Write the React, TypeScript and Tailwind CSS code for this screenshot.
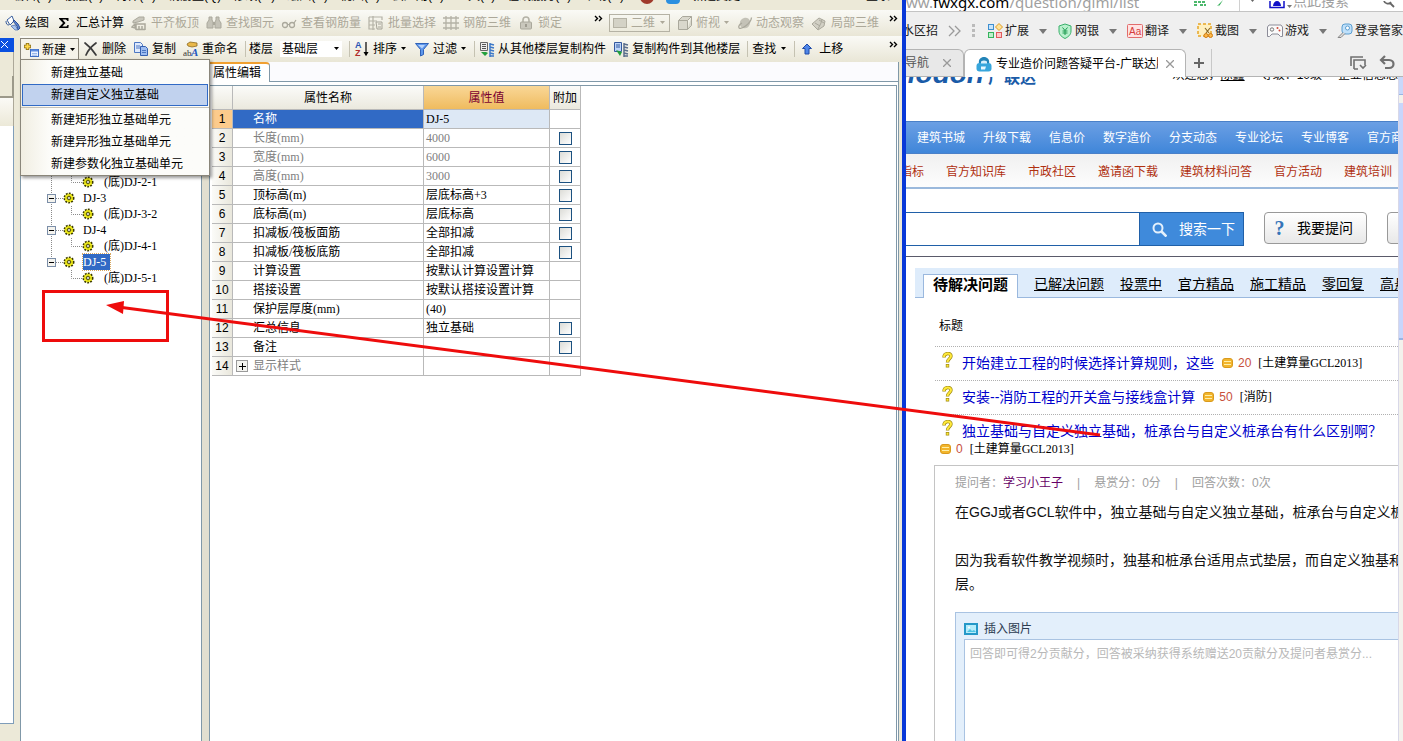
import type { ReactNode } from 'react'

const MENU_BAR = ['编辑(E)', '楼层(F)', '构件(N)', '钢筋量(Q)', '修改(M)', '绘图(D)', '视图(V)', '云应用(Y)', '工具(T)', '在线服务(S)', '帮助(H)']

const NEW_MENU = [
    ['新建独立基础', '新建自定义独立基础'],
    ['新建矩形独立基础单元', '新建异形独立基础单元', '新建参数化独立基础单元'],
]
const ACTIVE_ITEM = '新建自定义独立基础'

const TREE = [
    { label: '(底)DJ-2-1', child: true },
    { label: 'DJ-3' },
    { label: '(底)DJ-3-2', child: true },
    { label: 'DJ-4' },
    { label: '(底)DJ-4-1', child: true },
    { label: 'DJ-5', selected: true },
    { label: '(底)DJ-5-1', child: true, last: true },
]

interface Prop {
    name: string
    value: string
    check?: boolean
    muted?: boolean
}

const PROPS: Prop[] = [
    { name: '名称', value: 'DJ-5' },
    { name: '长度(mm)', value: '4000', check: true, muted: true },
    { name: '宽度(mm)', value: '6000', check: true, muted: true },
    { name: '高度(mm)', value: '3000', check: true, muted: true },
    { name: '顶标高(m)', value: '层底标高+3', check: true },
    { name: '底标高(m)', value: '层底标高', check: true },
    { name: '扣减板/筏板面筋', value: '全部扣减', check: true },
    { name: '扣减板/筏板底筋', value: '全部扣减', check: true },
    { name: '计算设置', value: '按默认计算设置计算' },
    { name: '搭接设置', value: '按默认搭接设置计算' },
    { name: '保护层厚度(mm)', value: '(40)' },
    { name: '汇总信息', value: '独立基础', check: true },
    { name: '备注', value: '', check: true },
    { name: '显示样式', value: '', muted: true },
]

const NAV = ['建筑书城', '升级下载', '信息价', '数字造价', '分支动态', '专业论坛', '专业博客', '官方商城']
const SUBNAV = ['指标', '官方知识库', '市政社区', '邀请函下载', '建筑材料问答', '官方活动', '建筑培训']
const LIST_TABS = ['已解决问题', '投票中', '官方精品', '施工精品', '零回复', '高悬赏']

const QUESTIONS = [
    { title: '开始建立工程的时候选择计算规则，这些', score: 20, tag: '[土建算量GCL2013]' },
    { title: '安装--消防工程的开关盒与接线盒计算', score: 50, tag: '[消防]' },
    { title: '独立基础与自定义独立基础，桩承台与自定义桩承台有什么区别啊？', score: 0, tag: '[土建算量GCL2013]' },
]

function Icon({ children }: { children: ReactNode }) {
    return (
        <svg width="16" height="16" viewBox="0 0 16 16" fill="none" className="shrink-0" aria-hidden="true">
            {children}
        </svg>
    )
}

function Caret({ className = 'text-black' }: { className?: string }) {
    return (
        <svg width="7" height="4" viewBox="0 0 7 4" className={`shrink-0 ${className}`} aria-hidden="true">
            <path d="M1 0h5L3.500 3z" fill="currentColor" />
        </svg>
    )
}

function More() {
    return (
        <svg width="10" height="8" viewBox="0 0 10 8" fill="none" stroke="#000" strokeWidth="1.400" className="mb-2 shrink-0" aria-hidden="true">
            <path d="M1 1l2.500 2.500L1 6M5 1l2.500 2.500L5 6" />
        </svg>
    )
}

/* ---- toolbar drawings ---- */

const PaintIcon = () => (
    <Icon>
        <path d="M2 5l5-4 2 5-4 4z" fill="#fff" stroke="#3a5f9e" />
        <path d="M1 6c0 3 1 4 3 4" stroke="#3a5f9e" />
        <path d="M8 6l4 5 1 4 2-2-2-4-4-4z" fill="#5b86d6" stroke="#2f4f94" />
        <path d="M6 11l4 4h3l-3-5z" fill="#a8c4ee" stroke="#4064aa" strokeWidth=".7" />
    </Icon>
)
const SumIcon = () => (
    <Icon>
        <path d="M3 3h9.500v3h-1L10 4.500H6.500L9.500 8l-3.200 3.600H10.500L11.500 10h1.200l-.3 3H3v-.8L7 8 3 3.800z" fill="#000" />
    </Icon>
)
const AlignIcon = () => (
    <Icon>
        <path d="M2 6l6-4h5v3l-6 2-5 1z" fill="#c9c7bc" stroke="#aaa89c" />
        <path d="M1 12l3-3v4zM5 9h9v6M5 9v6M8 11v4M11 11v4M5 14.500h9" stroke="#aaa89c" strokeWidth="1.500" />
    </Icon>
)
const BinocularIcon = () => (
    <Icon>
        <path d="M3 2h3v3l1 2v6H1V8l2-3zM10 2h3v3l2 3v5H9V7l1-2z" fill="#c4c2b7" stroke="#aaa89c" />
        <path d="M7 7h2v3H7z" fill="#aaa89c" />
    </Icon>
)
const GlassesIcon = () => (
    <Icon>
        <circle cx="4" cy="10" r="2.500" stroke="#aaa89c" strokeWidth="1.300" />
        <circle cx="11" cy="10" r="2.500" stroke="#aaa89c" strokeWidth="1.300" />
        <path d="M6.500 9.500h2M13 8l2-3" stroke="#aaa89c" strokeWidth="1.200" />
    </Icon>
)
const BatchIcon = () => (
    <Icon>
        <path d="M1 2h13v3M1 2v12h6M5 1v14M1 6h8M1 10h6" stroke="#b4b2a6" strokeWidth="1.200" />
        <path d="M8 7h6v7H9zM10 9h3M10 12h3" stroke="#a5a398" />
    </Icon>
)
const GridIcon = () => (
    <Icon>
        <path d="M0 3h16M0 8h16M0 13h16M3 1v14M8 1v14M13 1v14" stroke="#b4b2a6" strokeWidth="1.300" />
    </Icon>
)
const LockIcon = () => (
    <Icon>
        <path d="M5 7V5a3 3 0 016 0v2" stroke="#b4b2a6" strokeWidth="1.600" />
        <rect x="2.500" y="7" width="11" height="7" rx="1" fill="#c9c7bc" stroke="#aaa89c" />
        <path d="M8 9v3" stroke="#8f8d82" strokeWidth="1.500" />
    </Icon>
)
const CubeIcon = () => (
    <Icon>
        <path d="M1.500 5.500h9v9h-9zM1.500 5.500l4-4h9l-4 4M14.500 1.500v9l-4 4" fill="#d9d7cc" stroke="#aaa89c" />
    </Icon>
)
const OrbitIcon = () => (
    <Icon>
        <ellipse cx="8" cy="8" rx="5" ry="5.500" fill="#c4c2b7" transform="rotate(40 8 8)" />
        <path d="M2 13C5 15 14 8 14.500 2.500M2 13c-1-2 1-4 3-5" stroke="#aaa89c" strokeWidth="1.300" />
    </Icon>
)
const Local3dIcon = () => (
    <Icon>
        <path d="M1 9l7-6 6 3-1 5-6 4z" fill="#d2d0c5" stroke="#aaa89c" />
        <path d="M4 8l5 3M8 5l5 3M7 14l3-6 1-4" stroke="#aaa89c" />
    </Icon>
)
const NewIcon = () => (
    <Icon>
        <path d="M4.500 1v7M1 4.500h7" stroke="#8a6d16" strokeWidth="3.400" />
        <path d="M4.500 1.700v5.600M1.700 4.500h5.600" stroke="#ffd94a" strokeWidth="1.800" />
        <rect x="7.500" y="7.500" width="8" height="7" fill="#eaf2ff" stroke="#3f6fc4" />
        <path d="M8 8.500h7" stroke="#5c8be0" strokeWidth="2" />
        <path d="M9 11.500h5M9 13.200h5" stroke="#9ab8ea" />
    </Icon>
)
const DeleteIcon = () => (
    <Icon>
        <path d="M2 2c4 3 8 7 11 12M13 2C9 5 5 9 3 14" stroke="#3c3c3c" strokeWidth="1.700" strokeLinecap="round" />
    </Icon>
)
const CopyIcon = () => (
    <Icon>
        <path d="M1.500 1.500h6l2 2v8h-8z" fill="#dfeafc" stroke="#4c77c2" />
        <path d="M7.500 5.500h5l2 2v7h-7z" fill="#9dbcf0" stroke="#3560b0" />
        <path d="M3 5h4M3 7h4M9 9.500h4M9 11.500h4" stroke="#4c77c2" />
    </Icon>
)
const RenameIcon = () => (
    <Icon>
        <path d="M4 3l3-2 7 1v3L9 6 5 5z" fill="#e9b84a" stroke="#8d6b22" strokeWidth=".8" />
        <text x="0" y="15" fontSize="9" fontFamily="Liberation Serif" fill="#333">ab</text>
        <text x="8" y="15" fontSize="11" fontWeight="bold" fontStyle="italic" fontFamily="Liberation Serif" fill="#2457c0">A</text>
    </Icon>
)
const SortIcon = () => (
    <Icon>
        <text x="1" y="7" fontSize="9" fontWeight="bold" fontFamily="Liberation Sans" fill="#2b55b4">A</text>
        <text x="1" y="15" fontSize="9" fontWeight="bold" fontFamily="Liberation Sans" fill="#b02c2c">Z</text>
        <path d="M12 1v12M10.500 11.500L12 14l1.500-2.500z" stroke="#000" strokeWidth="1.200" fill="#000" />
    </Icon>
)
const FunnelIcon = () => (
    <Icon>
        <path d="M1.500 2.500h13l-5 6v5l-3 1.500V8.500z" fill="#5d97ec" stroke="#2f62b8" />
        <path d="M4 4h7L8 7.500z" fill="#b7d3fb" />
    </Icon>
)
const CopyFloorIcon = () => (
    <Icon>
        <path d="M1.500 1.500h7v8h-7z" fill="#eee" stroke="#666" />
        <path d="M3 3.500h4M3 5.500h4M3 7.500h4" stroke="#555" />
        <path d="M2 11l4 4 3-3-2-1z" fill="#23a03c" />
        <path d="M11 2v14M11 3l4 1M11 6l4 1M11 9l4 1M11 12l4 1M11 15h4" stroke="#3c78c8" strokeWidth="1.500" />
    </Icon>
)
const CopyToFloorIcon = () => (
    <Icon>
        <path d="M1.500 1.500h7v9h-7z" fill="#bcd4f8" stroke="#33589e" />
        <path d="M3 4h4M3 6h4" stroke="#33589e" />
        <path d="M3 9l4 6 2-4z" fill="#23a03c" />
        <path d="M11 2v14M11 3l4 1M11 6l4 1M11 9l4 1M11 12l4 1M11 15h4" stroke="#5a6e8c" strokeWidth="1.500" />
    </Icon>
)
const UpIcon = () => (
    <Icon>
        <path d="M8 3l4.500 4.500H10V13H6V7.500H3.500z" fill="#4f86e8" stroke="#1f4ba8" />
    </Icon>
)

const TOOLS_LEFT = [
    { label: '绘图', icon: <PaintIcon />, on: true },
    { label: '汇总计算', icon: <SumIcon />, on: true },
    { label: '平齐板顶', icon: <AlignIcon /> },
    { label: '查找图元', icon: <BinocularIcon /> },
    { label: '查看钢筋量', icon: <GlassesIcon /> },
    { label: '批量选择', icon: <BatchIcon /> },
    { label: '钢筋三维', icon: <GridIcon /> },
    { label: '锁定', icon: <LockIcon /> },
]

interface ToolProps {
    label: string
    icon?: ReactNode
    disabled?: boolean
    caret?: boolean
    divider?: boolean
    tight?: boolean
}

function Tool({ label, icon, disabled, caret, divider, tight }: ToolProps) {
    return (
        <div className={`flex shrink-0 items-center ${divider ? 'border-l border-[#c5c2b2] pl-1' : ''}`}>
            <button disabled={disabled} className={`flex items-center leading-4 ${tight ? 'gap-[3px]' : 'gap-1'} ${disabled ? 'text-[#aca899]' : 'text-black'}`}>
                {icon}
                {label}
                {caret && <Caret className={disabled ? 'text-[#aca899]' : 'text-black'} />}
            </button>
        </div>
    )
}

function GearIcon() {
    return (
        <svg width="12" height="12" viewBox="0 0 12 12" className="shrink-0" aria-hidden="true">
            <circle cx="6" cy="6" r="4.600" fill="#f2ee1c" stroke="#3a3800" strokeWidth="1.800" strokeDasharray="1.800 1.200" />
            <circle cx="6" cy="6" r="3.800" fill="#f2ee1c" />
            <path d="M6 2.500v7M2.500 6h7M3.800 3.800l4.400 4.400M8.200 3.800L3.800 8.200" stroke="#8c8600" strokeWidth=".6" />
            <circle cx="6" cy="6" r="1.500" fill="#fff" stroke="#3a3800" strokeWidth=".9" />
        </svg>
    )
}

function TreeNode({ label, child, selected, last }: { label: string; child?: boolean; selected?: boolean; last?: boolean }) {
    return (
        <li className="flex h-4 items-center">
            <svg width={child ? 61 : 42} height="16" className="shrink-0" stroke="#8a8a8a" strokeDasharray="1 1" fill="none" aria-hidden="true">
                {!last && <path d={selected ? 'M30.500 0v8' : 'M30.500 0v16'} />}
                {child ? (
                    <path d="M50.500 0v8.500H61" />
                ) : (
                    <>
                        <path d="M35 8.500h7" />
                        <rect x="26.500" y="4.500" width="8" height="8" fill="#f4f3ee" stroke="#7b8ea8" strokeDasharray="none" />
                        <path d="M28 8.500h5" stroke="#000" strokeDasharray="none" />
                    </>
                )}
            </svg>
            <GearIcon />
            <span className={`leading-4 ${child ? 'ml-[10px]' : 'ml-2'} ${selected ? 'bg-[#316ac5] pr-1 text-white outline-1 outline-dotted outline-[#d8a860]' : ''}`}>{label}</span>
        </li>
    )
}

function PropertyTable() {
    const cell = 'border-r border-b border-[#b9b9b9] p-0 font-normal'
    const head = 'bg-linear-to-b from-[#fbfbf9] to-[#ebe9de]'
    return (
        <table className="w-[369px] table-fixed border-separate border-spacing-0 font-['Liberation_Serif','Noto_Sans_CJK_SC',serif] text-xs leading-4">
            <colgroup>
                <col className="w-[21px]" />
                <col className="w-[191px]" />
                <col className="w-[126px]" />
                <col className="w-[31px]" />
            </colgroup>
            <thead>
                <tr className="h-6">
                    <th className={`${cell} ${head}`} />
                    <th className={`${cell} ${head}`}>属性名称</th>
                    <th className={`${cell} bg-linear-to-b from-[#f9d796] to-[#efbb5e] text-[#7a0030]`}>属性值</th>
                    <th className={`${cell} ${head}`}>附加</th>
                </tr>
            </thead>
            <tbody>
                {PROPS.map((p, i) => {
                    const first = i === 0
                    const group = i === PROPS.length - 1
                    return (
                        <tr key={p.name} className={`h-[19px] ${p.muted ? 'text-[#808080]' : 'text-black'}`}>
                            <th scope="row" className={`${cell} font-['Liberation_Sans',sans-serif] text-black ${first ? 'bg-[#fccb8c]' : 'bg-linear-to-r from-[#fbfbf8] to-[#e9e7dc]'}`}>
                                {i + 1}
                            </th>
                            <td className={`${cell} ${first ? 'bg-[#316ac5] text-white' : ''}`}>
                                {group ? (
                                    <div className="flex items-center gap-[5px] pl-[3px]">
                                        <button aria-label="展开" className="flex size-3 items-center justify-center border border-[#9a9a9a] bg-[#f4f4f0]">
                                            <svg width="7" height="7" stroke="#000" aria-hidden="true"><path d="M0 3.500h7M3.500 0v7" /></svg>
                                        </button>
                                        {p.name}
                                    </div>
                                ) : (
                                    <div className="pl-5">{p.name}</div>
                                )}
                            </td>
                            <td className={`${cell} ${first ? 'bg-[#dde8f5]' : ''}`}>
                                <div className="pl-[2px]">{p.value}</div>
                            </td>
                            <td className={cell}>
                                {p.check && (
                                    <input
                                        type="checkbox"
                                        aria-label={p.name}
                                        className="mx-auto block size-[13px] appearance-none border border-[#1c5180] bg-linear-to-br from-[#dcdcd7] to-white"
                                    />
                                )}
                            </td>
                        </tr>
                    )
                })}
            </tbody>
        </table>
    )
}

function NewMenu() {
    return (
        <div className="absolute top-full left-0 z-20 -mt-px w-[190px] border border-[#8a867a] bg-[#fcfcf9] bg-linear-to-r from-[#f1eee2] from-0% to-[#fcfcf9] to-15% pt-[2px] shadow-[2px_2px_3px_rgba(0,0,0,0.4)]">
            {NEW_MENU.map((group, g) => (
                <div key={g} className={g > 0 ? 'mt-px border-t border-[#c5c2b8] pt-px' : ''}>
                    {group.map(label => (
                        <button
                            key={label}
                            className={`mx-px flex h-[22px] w-[186px] items-center border pl-7 leading-4 ${
                                label === ACTIVE_ITEM ? 'border-[#316ac5] bg-[#c1d2ee]' : 'border-transparent'
                            }`}
                        >
                            {label}
                        </button>
                    ))}
                </div>
            ))}
        </div>
    )
}

function ModelerWindow() {
    return (
        <section className="flex min-w-0 flex-1 flex-col bg-[#ece9d8] text-xs text-black">
            {/* Menu bar */}
            <div className="flex h-[10px] shrink-0 items-end gap-3 overflow-hidden pb-[6px] pl-3 whitespace-nowrap">
                {MENU_BAR.map(m => (
                    <button key={m} className="leading-4">{m}</button>
                ))}
                <span className="ml-1 size-[14px] shrink-0 rounded-full bg-[#a03a2c]" />
                <span className="size-[14px] shrink-0 rounded-sm bg-[#2a8fe0]" />
                <button className="leading-4">新建变更</button>
                <button className="mr-3 ml-auto leading-4">登录</button>
            </div>

            {/* View toolbar */}
            <div className="flex h-[26px] shrink-0 items-center bg-linear-to-b from-[#fafaf6] to-[#e9e6d6] pr-[3px] pl-[5px] whitespace-nowrap">
                <div className="flex flex-1 items-center gap-[7px]">
                    {TOOLS_LEFT.map(t => (
                        <Tool key={t.label} label={t.label} icon={t.icon} disabled={!t.on} />
                    ))}
                </div>
                <More />
                <div className="ml-[5px] flex items-center gap-[7px]">
                    <label className="flex h-[18px] items-center gap-1 border border-[#b5b2a4] px-[3px] text-[#aca899]">
                        <span className="h-[10px] w-[14px] border border-[#b5b2a4] bg-[#d4d2c6]" />
                        <select disabled aria-label="视图" className="w-6 appearance-none leading-4">
                            <option>二维</option>
                        </select>
                        <Caret className="text-[#aca899]" />
                    </label>
                    <Tool label="俯视" icon={<CubeIcon />} disabled caret tight />
                    <Tool label="动态观察" icon={<OrbitIcon />} disabled tight />
                    <Tool label="局部三维" icon={<Local3dIcon />} disabled />
                </div>
                <span className="ml-[10px] flex"><More /></span>
            </div>

            <div className="flex min-h-0 flex-1">
                {/* Docked navigation strip */}
                <aside className="mr-[6px] flex w-[14px] shrink-0 flex-col pt-[2px]">
                    <button aria-label="关闭" className="flex h-[14px] items-center bg-[#0a50e0] pl-px">
                        <svg width="8" height="8" stroke="#fff" aria-hidden="true"><path d="M0 0l7 7M7 0L0 7" /></svg>
                    </button>
                    <div className="h-6 border-r border-[#aca899]" />
                    <div className="h-[22px] border-r-2 border-b-2 border-[#9c998a]" />
                    <div className="h-7 border-r border-[#aca899] bg-linear-to-b from-[#fbfaf6] to-[#ece9d8]" />
                    <div className="mb-[17px] flex-1 border-r border-b border-[#7f9db9] bg-white" />
                </aside>

                <div className="flex min-w-0 flex-1 flex-col">
                    {/* Component toolbar */}
                    <div className="flex h-[26px] shrink-0 items-center bg-linear-to-b from-[#fafaf6] to-[#e9e6d6] pr-[3px] whitespace-nowrap">
                        <div className="flex flex-1 items-center gap-[7px]">
                            <div className="relative -mr-[3px]">
                                <button className="flex h-[22px] items-center gap-[3px] border border-b-0 border-[#8a867a] bg-[#f5f3ea] px-[2px] leading-4">
                                    <NewIcon />
                                    新建
                                    <Caret />
                                </button>
                                <NewMenu />
                            </div>
                            <Tool label="删除" icon={<DeleteIcon />} tight />
                            <Tool label="复制" icon={<CopyIcon />} tight />
                            <Tool label="重命名" icon={<RenameIcon />} tight />
                            <label htmlFor="floor" className="border-l border-[#c5c2b2] pl-[3px] leading-4">楼层</label>
                            <div className="flex w-[62px] items-center bg-white pr-[2px]">
                                <select id="floor" className="min-w-0 flex-1 appearance-none pl-[2px] leading-4">
                                    <option>基础层</option>
                                </select>
                                <Caret />
                            </div>
                            <Tool label="排序" icon={<SortIcon />} caret divider tight />
                            <Tool label="过滤" icon={<FunnelIcon />} caret tight />
                            <Tool label="从其他楼层复制构件" icon={<CopyFloorIcon />} divider tight />
                            <Tool label="复制构件到其他楼层" icon={<CopyToFloorIcon />} tight />
                            <Tool label="查找" caret divider />
                            <Tool label="上移" icon={<UpIcon />} divider />
                        </div>
                        <More />
                    </div>

                    <div className="flex min-h-0 flex-1">
                        <ul className="w-[182px] shrink-0 border-x border-[#8098a8] bg-white pt-[112px] font-['Liberation_Serif','Noto_Sans_CJK_SC',serif]">
                            {TREE.map(n => (
                                <TreeNode key={n.label} {...n} />
                            ))}
                        </ul>
                        <div className="w-[7px] shrink-0 bg-[#e2dfd0]" />

                        {/* Property panel */}
                        <div className="mr-[3px] flex min-w-0 flex-1 flex-col border-x border-[#8098a8] bg-white">
                            <div className="flex h-5 border-b border-[#8098a8] bg-[#fbfbfe]">
                                <button className="-mb-px w-[60px] rounded-tr-sm border-t-2 border-r border-t-[#f0a030] border-r-[#8098a8] bg-white pl-[3px] text-left leading-4">
                                    属性编辑
                                </button>
                            </div>
                            <div className="mt-[3px] mr-px flex-1 border-t border-r border-[#8098a8] pl-[2px]">
                                <PropertyTable />
                            </div>
                        </div>
                    </div>
                </div>
            </div>
        </section>
    )
}

/* ---- browser ---- */

const BOOKMARKS = [
    {
        label: '扩展',
        icon: (
            <>
                <rect x="1.500" y="1.500" width="5" height="5" fill="#c8e4fa" stroke="#3d8fd0" />
                <path d="M12 0.500l3.500 3.500L12 7.500 8.500 4z" fill="#ffe49a" stroke="#e09a20" />
                <rect x="1.500" y="9.500" width="5" height="5" fill="#bdf0cc" stroke="#35b35c" />
                <rect x="9.500" y="9.500" width="5" height="5" fill="#ffc8c8" stroke="#e05c5c" />
            </>
        ),
    },
    {
        label: '网银',
        icon: (
            <>
                <path d="M8 1l6 2v5c0 4-3 6-6 7.500C5 14 2 12 2 8V3z" fill="#b9f0cd" stroke="#38b06a" />
                <path d="M5.500 4.500L8 7.500l2.500-3M8 7.500V12M5.500 8h5M5.500 10h5" stroke="#1e9a50" />
            </>
        ),
    },
    {
        label: '翻译',
        icon: (
            <>
                <rect x="0.500" y="1.500" width="15" height="13" rx="1" fill="#ffe3e3" stroke="#e26c6c" />
                <text x="2" y="12" fontSize="10" fontFamily="Liberation Sans" fill="#d43c3c">Aa</text>
            </>
        ),
    },
    {
        label: '截图',
        icon: (
            <>
                <rect x="1" y="1" width="13" height="12" fill="#fff0c0" stroke="#e8a628" strokeWidth="1.500" strokeDasharray="3 2" />
                <path d="M8 5l4 5M13 5l-4 5" stroke="#8a6a2a" strokeWidth="1.200" />
                <circle cx="9" cy="12.500" r="2" fill="#ffb84a" stroke="#d07c10" />
                <circle cx="13.500" cy="12.500" r="2" fill="#ffb84a" stroke="#d07c10" />
            </>
        ),
    },
    {
        label: '游戏',
        icon: (
            <>
                <path d="M2 2h12l1.500 2v9.500h-2L11 11H5l-2.500 2.500h-2V4z" fill="#fafafa" stroke="#8c8c98" />
                <circle cx="5" cy="6.500" r="1.700" stroke="#777" />
                <circle cx="10.500" cy="5" r="1" fill="#d04a3a" />
                <circle cx="12.500" cy="7.500" r="1" fill="#d04a3a" />
            </>
        ),
    },
    {
        label: '登录管家',
        icon: (
            <>
                <rect x="5" y="1" width="10" height="10" rx="3" fill="#bfe0fa" stroke="#5c9ed0" />
                <circle cx="10.500" cy="5" r="2" fill="#fff" stroke="#5c9ed0" />
                <path d="M6 9.500l-5 5h3l4-4" fill="#ddd" stroke="#888" />
            </>
        ),
    },
]

function CloseX() {
    return (
        <svg width="8" height="8" stroke="#999" strokeWidth="1.300" aria-hidden="true"><path d="M0 0l8 8M8 0L0 8" /></svg>
    )
}

function BrowserChrome() {
    return (
        <div className="shrink-0 bg-[#efefef]">
            {/* Address bar */}
            <div className="flex h-3 items-end overflow-hidden border-b border-[#c4c4c4] bg-white text-[15px] leading-5 text-[#a0a0a0]">
                <span className="-mb-px flex-1 whitespace-nowrap font-['Noto_Sans',sans-serif]">
                    ww.<span className="text-black">fwxgx.com</span>/question/giml/list
                </span>
                <svg width="34" height="10" className="mr-3 mb-px" aria-hidden="true">
                    <path d="M1 2h12M1 5h4m2 0h6" stroke="#4cb86c" strokeWidth="2" strokeDasharray="3 1" />
                    <path d="M30 0l-6 6 3-1-2 3z" fill="#2fae54" />
                </svg>
                <span className="flex h-3 w-[26px] items-start justify-center border-l border-[#d0d0d0]"><Caret className="text-[#666]" /></span>
                <svg width="24" height="10" className="ml-1" aria-hidden="true">
                    <path d="M1 0v6.500h14V0" fill="none" stroke="#1010c8" strokeWidth="1.500" />
                    <path d="M4 5c0-3 2-5 4-5s4 2 4 5z" fill="#1010c8" />
                    <path d="M18 4h5l-2.500 3z" fill="#777" />
                </svg>
                <span className="w-[90px] text-sm leading-5">点此搜索</span>
                <svg width="12" height="10" className="mr-2" fill="none" stroke="#666" strokeWidth="1.800" aria-hidden="true">
                    <path d="M1 0a4 4 0 007 1M7 2l4 4" />
                </svg>
            </div>

            {/* Bookmarks */}
            <div className="flex h-[37px] items-center overflow-hidden pt-px text-xs whitespace-nowrap text-[#222]">
                <a href="#" className="-ml-1 leading-4 text-[#222]">水区招</a>
                <svg width="14" height="12" fill="none" stroke="#9a9a9a" strokeWidth="1.300" className="ml-[10px] shrink-0" aria-hidden="true">
                    <path d="M1 1l5 5-5 5M7 1l5 5-5 5" />
                </svg>
                <svg width="3" height="14" className="mr-3 ml-[10px] shrink-0" fill="#bbb" aria-hidden="true">
                    <path d="M0 0h3v3H0zM0 5h3v3H0zM0 10h3v3H0z" />
                </svg>
                {BOOKMARKS.map(b => (
                    <button key={b.label} className="mr-[10px] flex shrink-0 items-center gap-[2px] leading-4">
                        <Icon>{b.icon}</Icon>
                        {b.label}
                        <svg width="8" height="5" className="ml-2 shrink-0" fill="#777" aria-hidden="true"><path d="M0 0h8L4 5z" /></svg>
                    </button>
                ))}
            </div>

            {/* Tabs */}
            <div className="flex h-7 items-stretch border-b border-[#b4b4b4] text-xs">
                <div className="flex w-[58px] items-center gap-[14px] overflow-hidden rounded-tr-md border-t border-r border-[#b4b4b4] bg-[#e8e8e8] text-[#555]">
                    <a href="#" className="-ml-px shrink-0 leading-4">导航</a>
                    <button aria-label="关闭标签" className="shrink-0"><CloseX /></button>
                </div>
                <div className="-mb-px flex w-[222px] items-center gap-1 rounded-t-md border border-b-0 border-[#b4b4b4] bg-white pr-[11px] pl-[11px]">
                    <Icon>
                        <path d="M3 8C2 3 5 1 8 1s6 2 5 7z" fill="#2384b8" />
                        <rect x="0.500" y="7" width="15" height="8.500" rx="3" fill="#37a6dc" />
                        <path d="M5 5.500c2-1.500 4-1.500 6 0v2H5z" fill="#d8f0fc" />
                        <path d="M5 10.500h5l-1 3H5z" fill="#e8f8ff" />
                    </Icon>
                    <span className="min-w-0 flex-1 overflow-hidden leading-4 whitespace-nowrap text-black">专业造价问题答疑平台-广联达服</span>
                    <button aria-label="关闭当前标签" className="ml-1"><CloseX /></button>
                </div>
                <button aria-label="新标签" className="flex w-[26px] items-center justify-center border-r border-[#c8c8c8]">
                    <svg width="10" height="10" stroke="#666" strokeWidth="2" aria-hidden="true"><path d="M5 0v10M0 5h10" /></svg>
                </button>
                <div className="mr-2 ml-auto flex items-center gap-3">
                    <svg width="18" height="16" fill="none" stroke="#707070" strokeWidth="1.600" aria-hidden="true">
                        <path d="M2 11V2h12M5 14V5h11v5M5 14h4M11 10l3 3 3-3" />
                    </svg>
                    <svg width="16" height="16" fill="none" stroke="#707070" strokeWidth="2.200" aria-hidden="true">
                        <path d="M3 5h7c6 0 6 8 0 8H6M6 1L2 5l4 4" />
                    </svg>
                </div>
            </div>
        </div>
    )
}

function CoinIcon() {
    return (
        <svg width="11" height="10" viewBox="0 0 11 10" className="shrink-0" aria-hidden="true">
            <rect x="0.500" y="0.500" width="10" height="9" rx="2.500" fill="#f2b52c" stroke="#d99a1c" />
            <path d="M2 3.500h7M2 6.500h7" stroke="#fff0a8" />
        </svg>
    )
}

function QuestionMark() {
    return (
        <svg width="11" height="16" viewBox="0 0 11 16" fill="none" className="mt-[5px] mr-[9px] shrink-0" aria-hidden="true">
            <path d="M2 5.500c0-5 7-5 7-1.500 0 3-3.500 2.500-3.500 6.500M5.500 12v3.500" stroke="#a08c14" strokeWidth="3.400" />
            <path d="M2 5c0-4.500 7-4.500 7-1 0 3-3.500 2.500-3.500 6M5.500 12.700v2" stroke="#ffe93a" strokeWidth="2" />
        </svg>
    )
}

function Score({ score, tag }: { score: number; tag: string }) {
    return (
        <span className="flex items-center gap-[5px]">
            <CoinIcon />
            <span className="text-xs leading-4 text-[#c8503c]">{score}</span>
            <span className="ml-[2px] font-['Liberation_Serif','Noto_Sans_CJK_SC',serif] text-xs leading-4">{tag}</span>
        </span>
    )
}

function QuestionList() {
    return (
        <ul className="mt-3 ml-[29px]">
            {QUESTIONS.map(q => {
                const wraps = q.score === 0
                return (
                    <li key={q.title} className="border-t border-dotted border-[#b0b0b0] pl-[7px]">
                        <div className={`flex items-start ${wraps ? 'h-[26px]' : 'h-[33px]'}`}>
                            <QuestionMark />
                            <div className="flex items-center gap-2 pt-[6px]">
                                <a href="#" className="text-sm leading-5 text-[#0000cc]">{q.title}</a>
                                {!wraps && <Score score={q.score} tag={q.tag} />}
                            </div>
                        </div>
                        {wraps && <div className="-ml-[2px] pb-2"><Score score={q.score} tag={q.tag} /></div>}
                    </li>
                )
            })}
        </ul>
    )
}

function QuestionDetail() {
    return (
        <article className="ml-[28px] flex min-h-0 flex-1 flex-col border-t border-l border-[#c4c4c4] pl-5">
            <p className="flex pt-[9px] text-xs leading-4 text-[#a0a0a0]">
                提问者：<a href="#" className="text-[#660066]">学习小王子</a>
                <span className="mx-[14px]">|</span>悬赏分：0分<span className="mx-[14px]">|</span>回答次数：0次
            </p>
            <div className="pt-[9px] text-sm leading-6 text-[#111]">
                <p>在GGJ或者GCL软件中，独立基础与自定义独立基础，桩承台与自定义桩</p>
                <p className="pt-6">因为我看软件教学视频时，独基和桩承台适用点式垫层，而自定义独基和</p>
                <p>层。</p>
            </div>
            <div className="mt-4 flex flex-1 flex-col border-t border-l border-[#a9c3e2] bg-[#e3effb] pl-2">
                <button className="flex h-[26px] items-center gap-[6px] pt-[6px] text-xs leading-4 text-[#2c3c50]">
                    <svg width="14" height="12" aria-hidden="true">
                        <rect x="1" y="1" width="12" height="10" fill="#b5ecfa" stroke="#2498c8" strokeWidth="2" />
                        <path d="M3 9l3-3 2 2 2-1 2 2z" fill="#4cc4e4" />
                        <circle cx="5" cy="4.500" r="1" fill="#fff" />
                    </svg>
                    插入图片
                </button>
                <textarea
                    aria-label="回答"
                    placeholder="回答即可得2分贡献分，回答被采纳获得系统赠送20贡献分及提问者悬赏分..."
                    className="block flex-1 resize-none border-t border-l border-[#a9c3e2] bg-white px-[5px] pt-[6px] text-xs leading-4 placeholder:text-[#b8b8b8]"
                />
            </div>
        </article>
    )
}

function BrowserWindow() {
    return (
        <section className="flex w-[501px] shrink-0 flex-col border-l-4 border-[#0838d8] bg-white text-black">
            <BrowserChrome />
            <div className="flex min-h-0 flex-1">
                <main className="flex min-w-0 flex-1 flex-col overflow-hidden whitespace-nowrap">
                    {/* Site header */}
                    <div className="flex h-11 shrink-0 items-start overflow-hidden">
                        <span className="-mt-[13px] -ml-5 text-[28px] leading-5 font-bold text-[#1a5ba8] italic">Glodon</span>
                        <span className="-mt-[9px] ml-1 text-base leading-5 font-bold text-[#1a5ba8]">广联达</span>
                        <span className="-mt-[10px] ml-auto flex gap-4 text-xs leading-4">
                            <span>欢迎您，<a href="#" className="underline">陈鑫</a></span>
                            <span>等级：10级</span>
                            <span>企业信息总</span>
                        </span>
                    </div>
                    <nav className="flex h-[33px] shrink-0 items-center gap-[18px] border-t border-b border-[#4a80c8] bg-linear-to-b from-[#6b9fe4] to-[#3f86d9] pl-[11px] text-xs leading-4 text-white">
                        {NAV.map(n => <a key={n} href="#" className="shrink-0">{n}</a>)}
                    </nav>
                    <nav className="flex h-[35px] shrink-0 items-center gap-[22px] border-b-2 border-[#9bb9dc] bg-linear-to-b from-[#f0f0f0] to-[#fdfdfd] pt-[2px] text-xs leading-4 text-[#b03010]">
                        {SUBNAV.map((n, i) => <a key={n} href="#" className={i === 0 ? '-ml-[6px] shrink-0' : 'shrink-0'}>{n}</a>)}
                    </nav>

                    {/* Search */}
                    <form className="flex shrink-0 items-start border-b border-[#5a5a6a] pt-[23px] pb-[10px]">
                        <input aria-label="搜索" className="h-[34px] w-[233px] shrink-0 border-y border-[#2060a8] bg-white px-2 text-sm" />
                        <button type="button" className="flex h-[34px] w-[105px] shrink-0 items-center gap-3 border border-[#2060a8] bg-[#3f8adb] pl-3 text-sm leading-5 text-white">
                            <svg width="15" height="15" fill="none" stroke="#e4f0fc" strokeWidth="2" aria-hidden="true">
                                <circle cx="6" cy="6" r="4.500" />
                                <path d="M9.500 9.500l5 5" strokeWidth="2.600" />
                            </svg>
                            搜索一下
                        </button>
                        <button type="button" className="ml-5 flex h-8 w-[103px] shrink-0 items-center gap-3 rounded border border-[#999] bg-linear-to-b from-white to-[#e8e8e8] pl-[9px] text-sm leading-5">
                            <span className="w-[11px] font-['Liberation_Serif',serif] text-xl leading-6 font-bold text-[#3574b8]">?</span>
                            我要提问
                        </button>
                        <button type="button" aria-label="更多" className="ml-5 h-8 w-[103px] shrink-0 rounded border border-[#999] bg-linear-to-b from-white to-[#e8e8e8]" />
                    </form>

                    {/* List tabs */}
                    <div className="mt-[11px] ml-[9px] flex h-[30px] shrink-0 items-end gap-4 border-b border-[#9ab8de] bg-[#deecfb] pl-2 text-sm leading-5">
                        <a href="#" className="-mb-px h-6 w-[95px] shrink-0 border border-b-0 border-[#9ab8de] bg-white text-center text-[15px] font-bold">待解决问题</a>
                        {LIST_TABS.map(t => (
                            <a key={t} href="#" className="mb-[3px] shrink-0 underline">{t}</a>
                        ))}
                    </div>
                    <h2 className="mt-5 ml-[33px] shrink-0 text-xs leading-4">标题</h2>
                    <QuestionList />
                    <QuestionDetail />
                </main>

                {/* Scroll bar */}
                <div className="w-[5px] shrink-0 border-l border-[#d8d8e8] bg-[#f3f2ec]">
                    <div className="h-[18px] border-b border-[#98b4e4] bg-[#c8d8fa]" />
                    <div className="mt-2 h-[237px] border-b-2 border-[#98b4e4] bg-[#c8d6fb]" />
                </div>
            </div>
        </section>
    )
}

export default function App() {
    return (
        <div className="relative flex h-screen w-full overflow-hidden font-['Liberation_Sans','Noto_Sans_CJK_SC',sans-serif]">
            <ModelerWindow />
            <BrowserWindow />

            {/* Hand-drawn annotation */}
            <svg className="pointer-events-none absolute inset-0 z-30 size-full" fill="none" aria-hidden="true">
                <rect x="43.500" y="291.500" width="124" height="49" stroke="#ee0c0c" strokeWidth="3" />
                <path d="M122 307.500L1100 435" stroke="#ee0c0c" strokeWidth="3" />
                <path d="M106 305l18-4-1 13z" fill="#ee0c0c" />
            </svg>
        </div>
    )
}
